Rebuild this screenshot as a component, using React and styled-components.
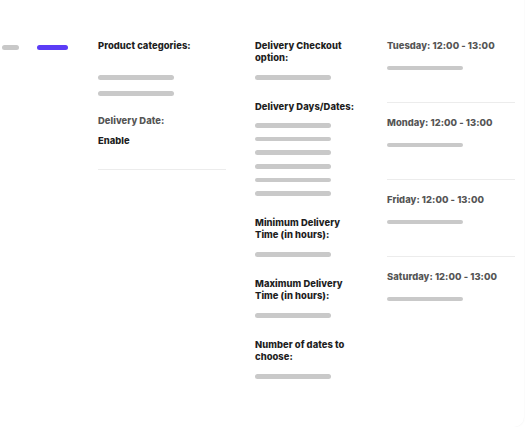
import React from "react";
import styled, { createGlobalStyle } from "styled-components";

const Global = createGlobalStyle`
  html, body { margin: 0; padding: 0; background: #fff; }
  body { font-family: Inter, "Noto Sans", "Liberation Sans", sans-serif; }
`;

const Card = styled.div`
  box-sizing: border-box;
  width: 534px;
  height: 437px;
  margin: -10px 0 0 -10px;
  border-radius: 10px;
  background: #fff;
  box-shadow: 0 0 2px rgba(0, 0, 0, 0.07);
  padding: 50px 0 0 12px;
  display: flex;
  align-items: flex-start;
`;

const Nav = styled.div`
  display: flex;
  align-items: center;
  gap: 18px;
  width: 96px;
  margin-top: 5px;
`;

const NavPill = styled.div`
  height: 5px;
  width: ${(p) => p.$w}px;
  border-radius: 3px;
  background: ${(p) => (p.$active ? "#5b3cf6" : "#c8c8c8")};
`;

const Column = styled.div`
  display: flex;
  flex-direction: column;
  width: ${(p) => p.$w}px;
  margin-right: ${(p) => p.$mr || 0}px;
`;

const Label = styled.div`
  font-size: 9.4px;
  line-height: 12px;
  font-weight: 800;
  letter-spacing: 0.05px;
  color: ${(p) => (p.$muted ? "#555" : "#1e1e1e")};
  margin-top: ${(p) => p.$mt || 0}px;
`;

const Bar = styled.div`
  width: 76px;
  height: 4.5px;
  border-radius: 3px;
  background: #c9c9c9;
  margin-top: ${(p) => p.$mt || 0}px;
`;

const Divider = styled.div`
  height: 1px;
  background: #ececec;
  margin-top: ${(p) => p.$mt || 0}px;
`;

const Slot = styled.div`
  display: flex;
  flex-direction: column;
`;

const slots = [
  "Tuesday: 12:00 - 13:00",
  "Monday: 12:00 - 13:00",
  "Friday: 12:00 - 13:00",
  "Saturday: 12:00 - 13:00",
];

export default function App() {
  return (
    <>
      <Global />
      <Card>
        <Nav>
          <NavPill $w={17} />
          <NavPill $w={31} $active />
        </Nav>
        <Column $w={128} $mr={29}>
          <Label>Product categories:</Label>
          <Bar $mt={23} />
          <Bar $mt={11.5} />
          <Label $muted $mt={19.5}>Delivery Date:</Label>
          <Label $mt={8}>Enable</Label>
          <Divider $mt={22} />
        </Column>
        <Column $w={132}>
          <Label>
            Delivery Checkout
            <br />
            option:
          </Label>
          <Bar $mt={11} />
          <Label $mt={21}>Delivery Days/Dates:</Label>
          <Bar $mt={10.5} />
          <Bar $mt={9.2} />
          <Bar $mt={9.2} />
          <Bar $mt={9.2} />
          <Bar $mt={9.2} />
          <Bar $mt={9.2} />
          <Label $mt={21}>
            Minimum Delivery
            <br />
            Time (in hours):
          </Label>
          <Bar $mt={11.5} />
          <Label $mt={21}>
            Maximum Delivery
            <br />
            Time (in hours):
          </Label>
          <Bar $mt={11.5} />
          <Label $mt={21.5}>
            Number of dates to
            <br />
            choose:
          </Label>
          <Bar $mt={11} />
        </Column>
        <Column $w={128}>
          {slots.map((s, i) => (
            <Slot key={s}>
              {i > 0 && <Divider $mt={31.5} />}
              <Label $muted $mt={i > 0 ? 14.5 : 0}>
                {s}
              </Label>
              <Bar $mt={13.5} />
            </Slot>
          ))}
        </Column>
      </Card>
    </>
  );
}
